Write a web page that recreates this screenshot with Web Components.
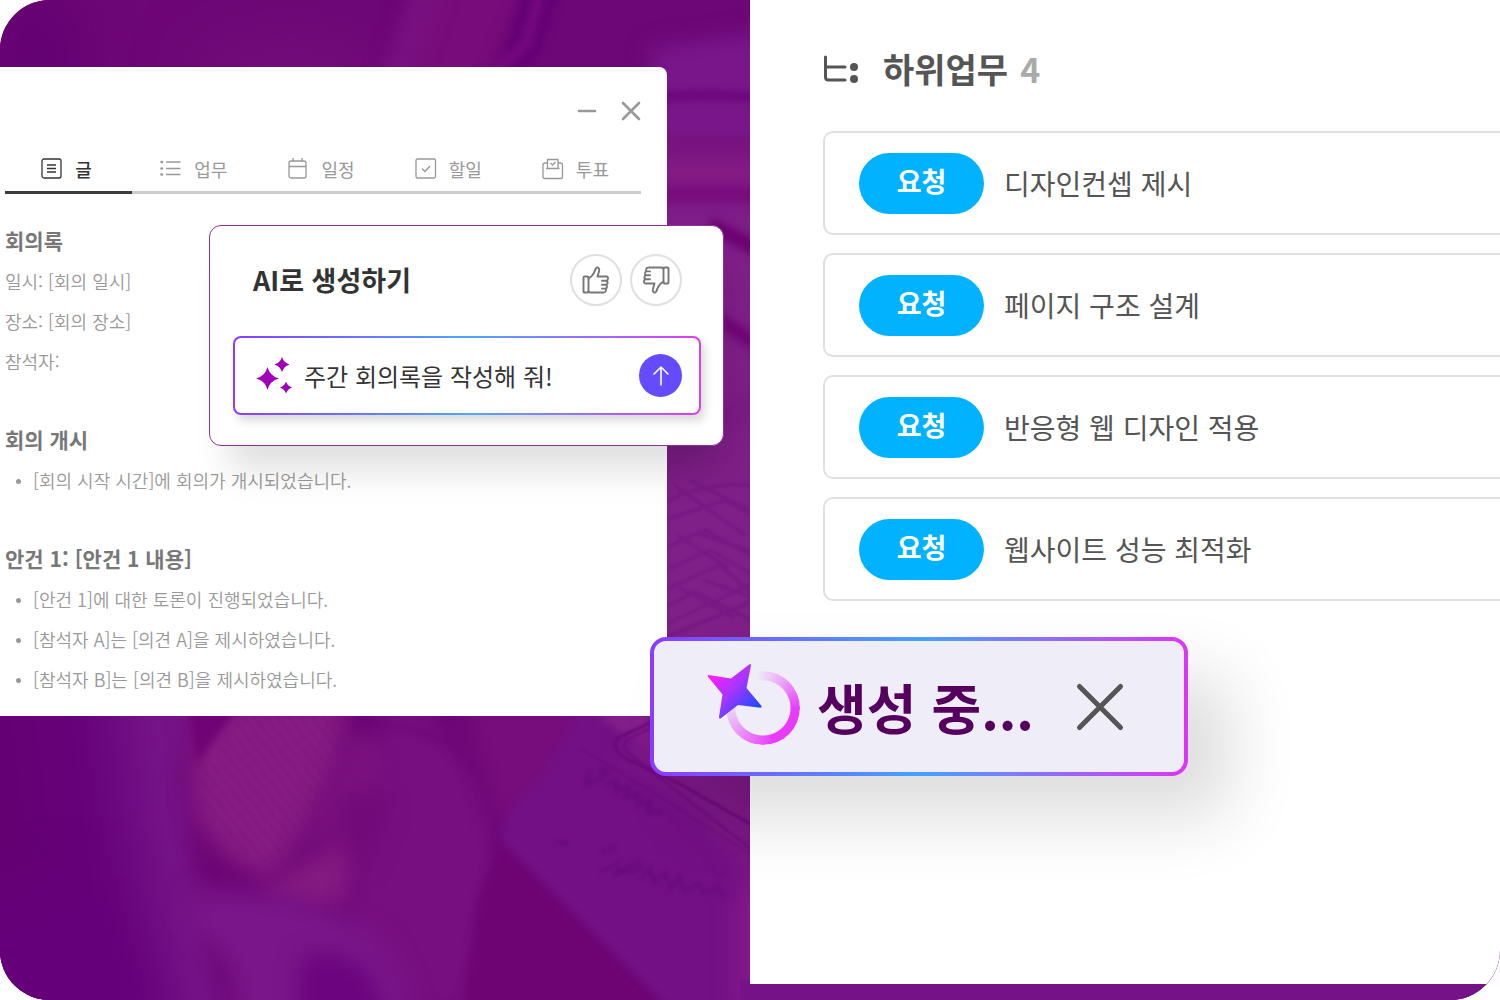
<!DOCTYPE html>
<html lang="ko">
<head>
<meta charset="utf-8">
<meta name="viewport" content="width=device-width, initial-scale=1">
<title>AI로 생성하기</title>
<style>
  body { margin: 0; background: #fff; font-family: "Noto Sans CJK KR", "Noto Sans", sans-serif; }
</style>
</head>
<body>
<work-stage>
  <photo-backdrop slot="backdrop"></photo-backdrop>
  <post-window slot="left">
    <post-tab icon="post" active>글</post-tab>
    <post-tab icon="list">업무</post-tab>
    <post-tab icon="calendar">일정</post-tab>
    <post-tab icon="todo">할일</post-tab>
    <post-tab icon="vote">투표</post-tab>
    <note-section slot="body" heading="회의록">
      <note-line>일시: [회의 일시]</note-line>
      <note-line>장소: [회의 장소]</note-line>
      <note-line>참석자:</note-line>
    </note-section>
    <note-section slot="body" heading="회의 개시">
      <note-line bullet>[회의 시작 시간]에 회의가 개시되었습니다.</note-line>
    </note-section>
    <note-section slot="body" heading="안건 1: [안건 1 내용]">
      <note-line bullet>[안건 1]에 대한 토론이 진행되었습니다.</note-line>
      <note-line bullet>[참석자 A]는 [의견 A]을 제시하였습니다.</note-line>
      <note-line bullet>[참석자 B]는 [의견 B]을 제시하였습니다.</note-line>
    </note-section>
  </post-window>
  <subtask-panel slot="right" heading="하위업무" count="4">
    <subtask-item status="요청">디자인컨셉 제시</subtask-item>
    <subtask-item status="요청">페이지 구조 설계</subtask-item>
    <subtask-item status="요청">반응형 웹 디자인 적용</subtask-item>
    <subtask-item status="요청">웹사이트 성능 최적화</subtask-item>
  </subtask-panel>
  <ai-prompt slot="overlay" heading="AI로 생성하기" prompt="주간 회의록을 작성해 줘!"></ai-prompt>
  <progress-toast slot="overlay">생성 중...</progress-toast>
</work-stage>

<script>
const RESET = `
  *, *::before, *::after { box-sizing: border-box; }
  h2, h3, p { margin: 0; }
  button { font: inherit; color: inherit; background: none; border: 0; padding: 0; cursor: pointer; }
  svg { display: block; }
`;

class BaseElement extends HTMLElement {
  connectedCallback() {
    if (this.shadowRoot) return;
    this.attachShadow({ mode: "open" }).innerHTML = `<style>${RESET}${this.css()}</style>${this.html()}`;
  }
}

customElements.define("work-stage", class extends BaseElement {
  css() { return `
    :host { display: block; }
    .stage { position: relative; display: grid; grid-template-columns: 1fr 1fr; min-height: 100vh;
      border-radius: 50px 0 50px 50px; overflow: hidden; background: #6f0676; }
  `; }
  html() { return `<main class="stage"><slot name="backdrop"></slot><slot name="left"></slot><slot name="right"></slot><slot name="overlay"></slot></main>`; }
});

/* Purple-toned, out-of-focus desk photo drawn with soft shapes */
customElements.define("photo-backdrop", class extends BaseElement {
  css() { return `:host { position: absolute; inset: 0; } svg { width: 100%; height: 100%; }`; }
  html() {
    const blur = (id, deviation) => `<filter id="${id}" filterUnits="userSpaceOnUse" x="-150" y="-150" width="1100" height="1300" color-interpolation-filters="sRGB"><feGaussianBlur stdDeviation="${deviation}"/></filter>`;
    return `
    <svg viewBox="0 0 1500 1000" preserveAspectRatio="xMinYMin slice" aria-hidden="true">
      <defs>
        ${blur("b40", 28)}${blur("b12", 11)}${blur("b4", 4)}${blur("b1", 1)}${blur("b2", 2)}
        <pattern id="knit" width="9" height="9" patternUnits="userSpaceOnUse" patternTransform="rotate(-38)">
          <path d="M2 0V9" stroke="#721078" stroke-width="1.5" opacity=".4"/>
        </pattern>
        <linearGradient id="sleeve" gradientUnits="userSpaceOnUse" x1="0" y1="760" x2="200" y2="735"><stop offset="0" stop-color="#650073"/><stop offset=".4" stop-color="#66017a"/><stop offset=".8" stop-color="#761489"/><stop offset="1" stop-color="#781588"/></linearGradient>
      </defs>
      <rect width="1500" height="1000" fill="#6d0676"/>
      <rect width="70" height="200" fill="#620072" filter="url(#b40)"/>
      <ellipse cx="290" cy="70" rx="100" ry="40" fill="#730c7b" filter="url(#b40)"/>
      <path d="M420-20H530L480 90H390Z" fill="#780c7a" filter="url(#b12)"/>
      <path d="M420-20H440L405 90H380Z" fill="#7a1384" filter="url(#b12)"/>
      <path d="M522-10H560L540 50L515 80H500Z" fill="#650076" filter="url(#b4)"/>
      <path d="M540-5L526 44L488 80" fill="none" stroke="#7b0b80" stroke-width="8" filter="url(#b4)"/>
      <path d="M650 48L780 30V230H650Z" fill="#79178a" filter="url(#b12)"/>
      <path d="M650 100Q700 90 770 100" stroke="#6a007a" stroke-width="8" fill="none" filter="url(#b4)"/>
      <path d="M650 136H780V158H650Z" fill="#78137f" filter="url(#b4)"/>
      <path d="M650 160H780V188H650Z" fill="#861c82" filter="url(#b12)"/>
      <path d="M650 188H780V205H650Z" fill="#78087b" filter="url(#b4)"/>
      <path d="M650 205H780V720H650Z" fill="#7f1f88" filter="url(#b12)"/>
      <path d="M710 225L770 255" stroke="#6c0070" stroke-width="15" filter="url(#b4)"/>
      <path d="M720 320L765 350" stroke="#710478" stroke-width="14" filter="url(#b4)"/>
      <path d="M655 470Q700 430 760 400" stroke="#761680" stroke-width="12" filter="url(#b12)" fill="none"/>
      <g fill="none" stroke="#741681" stroke-width="3" opacity=".7" filter="url(#b1)">
        <path d="M660 505Q705 480 755 486M665 520L725 500L760 520M660 550L705 530L760 560M660 573L710 550L765 582M660 592L720 565L765 605M660 610L695 592L755 622"/>
        <path d="M674 485L745 535M690 480L755 513M677 535L728 568M700 534L755 553M660 640L755 600M660 627L755 582M680 588L735 618M704 580L755 598"/>
      </g>
      <path d="M-60 680H190L180 780Q190 890 230 1040H-60Z" fill="url(#sleeve)" filter="url(#b12)"/>
      <path d="M-80 900L100 880L180 1040H-80Z" fill="#66007a" filter="url(#b40)"/>
      <path d="M190 700H350L335 780Q290 860 268 880Q205 850 193 805Z" fill="#861c83" filter="url(#b12)"/>
      <path d="M188 700H245L195 765Z" fill="#700375" filter="url(#b4)"/>
      <path d="M240 716H348L325 790Q290 850 270 865Q205 840 200 785Z" fill="url(#knit)" filter="url(#b1)"/>
      <path d="M352 735L380 735L410 780L350 830L300 850L330 780Z" fill="#7a127e" filter="url(#b12)"/>
      <path d="M340 840Q370 805 370 800L350 905Q280 910 260 890Z" fill="#841b82" filter="url(#b12)"/>
      <path d="M380 690Q470 720 500 850L470 1010H400L350 930Q350 840 380 800Z" fill="#770f80" filter="url(#b12)"/>
      <path d="M340 800Q350 780 390 805L365 870L340 850Z" fill="#730a7a" filter="url(#b12)"/>
      <path d="M190 890Q340 890 390 950L430 1040H230Q250 960 190 930Z" fill="#7a1689" filter="url(#b12)"/>
      <path d="M300 960Q330 940 370 975L395 1040H300Z" fill="#6b047e" filter="url(#b12)"/>
      <path d="M353 722Q420 725 455 748Q495 785 500 850" fill="none" stroke="#6c0578" stroke-width="6" opacity=".8" filter="url(#b4)"/>
      <path d="M460 690H600L585 770L515 820L500 835Z" fill="#770d7c" filter="url(#b12)"/>
      <path d="M500 842L780 1130H445L478 900Z" fill="#6e0474" filter="url(#b4)"/>
      <path d="M590 690H780V1060H720L500 840Q505 805 540 780Z" fill="#731085" filter="url(#b4)"/>
      <path d="M655 716H760V890L690 800L620 755Z" fill="#7c1986" filter="url(#b12)"/>
      <path d="M598 716L650 700V745L620 732Z" fill="#831f8b" filter="url(#b4)"/>
      <path d="M735 1010V900L765 850V1010Z" fill="#84188b" filter="url(#b12)"/>
      <path d="M652 722L618 738Q610 748 625 758L680 784L752 825" fill="none" stroke="#690979" stroke-width="3" filter="url(#b1)"/>
      <path d="M656 726L628 739Q618 746 632 756L752 850" fill="none" stroke="#6e0b7d" stroke-width="2" filter="url(#b1)"/>
      <path d="M580 748L625 775L760 860" fill="none" stroke="#690979" stroke-width="1" filter="url(#b1)"/>
      <g fill="none" stroke="#62067a" stroke-width="4" opacity=".6" filter="url(#b2)">
        <path d="M590 770L586 784L602 778Q612 768 598 770M606 785L617 782L616 791L628 787L626 798L638 794L637 804L650 802L648 812L662 812"/>
        <path d="M555 842L570 843M600 852L616 848M620 862L600 872M620 868L614 876L638 861Q648 872 622 872M640 880L650 868L654 883L665 873L670 889L680 876L684 891L700 884L704 893L718 888L725 898"/>
      </g>
      <rect x="740" y="980" width="780" height="30" fill="#761287"/>
    </svg>`; }
});

const TAB_ICONS = {
  post: `<rect x="1" y="1" width="19" height="19" rx="2"/><path d="M6 7H15M6 10.500H15M6 14H15"/>`,
  list: `<path d="M6 4H20.500M6 10.500H20.500M6 16.500H20.500"/><path d="M1.500 4H2M1.500 10.500H2M1.500 16.500H2" stroke-width="2.600" stroke-linecap="round"/>`,
  calendar: `<rect x="2" y="3" width="17" height="17" rx="2"/><path d="M2 8.500H19M6 0V4M15 0V4"/>`,
  todo: `<rect x="1" y="1" width="19.500" height="19" rx="1.500"/><path d="M7 10.500L10 13.500L15 8"/>`,
  vote: `<path d="M5 5H3Q1 5 1 7V18.500Q1 20.500 3 20.500H18.500Q20.500 20.500 20.500 18.500V7Q20.500 5 18.500 5H16.500M4 10.500H17.500M5.500 10.500V1.500H16V10.500M8.500 5L10.500 7L13.500 4"/>`
};

customElements.define("post-tab", class extends BaseElement {
  css() { return `
    :host { display: block; }
    button { display: flex; align-items: center; justify-content: center; gap: 12px; width: 100%; height: 50px; padding: 2px 4px 0 0;
      font-size: 18px; line-height: 26px; color: #999; border-bottom: 3px solid #ccc; }
    svg { width: 22px; height: 22px; fill: none; stroke: currentColor; stroke-width: 1.3; }
    :host([active]) button { color: #333; border-color: #3c3c3c; font-weight: 500; }
  `; }
  html() { return `<button role="tab" type="button" aria-selected="${this.hasAttribute("active")}">
    <svg viewBox="0 0 22 22" aria-hidden="true">${TAB_ICONS[this.getAttribute("icon")]}</svg><span><slot></slot></span></button>`; }
});

customElements.define("post-window", class extends BaseElement {
  css() { return `
    :host { display: block; position: relative; padding: 67px 83px 0 0; }
    .window { background: #fff; border-radius: 0 8px 0 0; padding: 32px 26px 17px 5px; }
    .controls { display: flex; justify-content: flex-end; gap: 20px; }
    .controls svg { width: 24px; height: 24px; stroke: #999; stroke-width: 2.6; stroke-linecap: round; fill: none; }
    .controls button + button svg { margin-right: -2px; }
    .tabs { display: grid; grid-template-columns: repeat(5, 1fr); margin-top: 21px; }
    .body { display: flex; flex-direction: column; gap: 38px; margin-top: 26px; }
  `; }
  html() { return `<section class="window">
    <div class="controls">
      <button type="button" aria-label="최소화"><svg viewBox="0 0 24 24"><path d="M4 12H20"/></svg></button>
      <button type="button" aria-label="닫기"><svg viewBox="0 0 24 24"><path d="M4 4L20 20M20 4L4 20"/></svg></button>
    </div>
    <div class="tabs" role="tablist"><slot></slot></div>
    <div class="body"><slot name="body"></slot></div>
  </section>`; }
});

customElements.define("note-section", class extends BaseElement {
  css() { return `
    :host { display: block; }
    h3 { margin-bottom: 1px; font-size: 21px; line-height: 40px; font-weight: 700; color: #777; }
  `; }
  html() { return `<h3>${this.getAttribute("heading")}</h3><slot></slot>`; }
});

customElements.define("note-line", class extends BaseElement {
  css() { return `
    :host { display: flex; align-items: center; font-size: 18px; line-height: 40px; color: #999; font-weight: 350; }
    :host([bullet])::before { content: ""; width: 5px; height: 5px; margin: 2px 12px 0 11px; border-radius: 50%; background: #999; }
  `; }
  html() { return `<p><slot></slot></p>`; }
});

customElements.define("subtask-panel", class extends BaseElement {
  css() { return `
    :host { display: block; position: relative; background: #fff; margin: 0 0 16px; padding: 44px 0 0 73px; overflow: hidden; }
    header { display: flex; align-items: center; gap: 24px; height: 50px; }
    svg { width: 36px; height: 28px; }
    h2 { display: flex; gap: 12px; font-size: 34px; line-height: 50px; font-weight: 700; color: #555; }
    .count { color: #aaa; }
    .list { display: flex; flex-direction: column; gap: 18px; margin: 37px -20px 0 0; }
  `; }
  html() { return `<header>
      <svg viewBox="0 0 36 28" fill="none" stroke="#555" stroke-width="3" stroke-linecap="round" aria-hidden="true">
        <path d="M2.500 2V22Q2.500 25 5.500 25H22M3 12H22"/><circle cx="31" cy="12" r="4" fill="#555" stroke="none"/><circle cx="31" cy="24" r="4" fill="#555" stroke="none"/>
      </svg>
      <h2>${this.getAttribute("heading")}<span class="count">${this.getAttribute("count")}</span></h2>
    </header>
    <div class="list" role="list"><slot></slot></div>`; }
});

customElements.define("subtask-item", class extends BaseElement {
  css() { return `
    :host { display: flex; align-items: center; gap: 20px; box-sizing: border-box; height: 104px; padding: 0 34px;
      border: 2px solid #e0e0e0; border-radius: 10px; background: #fff; }
    .status { width: 125px; height: 61px; padding-bottom: 4px; border-radius: 31px; background: #00b2ff; color: #fff;
      display: flex; align-items: center; justify-content: center; font-size: 27px; line-height: 40px; font-weight: 700; }
    .title { font-size: 28px; line-height: 42px; color: #555; }
  `; }
  connectedCallback() { super.connectedCallback(); this.setAttribute("role", "listitem"); }
  html() { return `<span class="status">${this.getAttribute("status")}</span><span class="title"><slot></slot></span>`; }
});

const THUMB = `<rect x="1.500" y="10.500" width="5" height="16" rx="1"/>
  <path d="M6.500 12.500Q11 10 12.500 5.500L13.800 2.500Q15 .8 16.500 2Q17.800 3 17 5.500L15.500 10.500H24.500Q26.300 10.700 26 13Q25.800 14.500 24 14.800Q26 15.500 25.600 17.200Q25.300 18.600 23.700 18.800Q25.300 19.500 25 21Q24.800 22.400 23.300 22.600Q24.500 23.500 23.800 25Q23.200 26.500 21.500 26.500H9Q7.500 26.500 6.500 25.500M20 14.800H24M20 18.800H23.700M20 22.600H23.300"/>`;

customElements.define("ai-prompt", class extends BaseElement {
  css() { return `
    :host { position: absolute; left: 209px; top: 225px; width: 515px; }
    .card { padding: 28px 22px 30px 23px; background: #fff; border: 1px solid #8f2f9f; border-radius: 12px;
      box-shadow: 10px 34px 36px -10px rgba(0, 0, 0, .13); }
    header { display: flex; align-items: center; gap: 8px; padding: 0 19px 0 20px; }
    h2 { flex: 1; font-size: 27px; line-height: 52px; font-weight: 700; color: #333; }
    .vote { display: flex; align-items: center; justify-content: center; width: 52px; height: 52px; border: 2px solid #e0e0e0; border-radius: 50%; }
    .vote svg { width: 28px; height: 28px; fill: none; stroke: #777; stroke-width: 1.9; stroke-linejoin: round; stroke-linecap: round; }
    .down svg { transform: rotate(180deg); }
    form { display: flex; align-items: center; gap: 12px; height: 79px; margin-top: 30px; padding: 0 17px 0 21px;
      border: 2px solid transparent; border-radius: 8px;
      background: linear-gradient(#fff, #fff) padding-box, linear-gradient(90deg, #8a3cff, #4da6ff 50%, #dd3cf5) border-box;
      box-shadow: 4px 6px 10px rgba(0, 0, 0, .14); }
    .spark { width: 36px; height: 38px; fill: #a000b8; }
    input { flex: 1; min-width: 0; border: 0; padding: 0; outline: 0; background: none; font: inherit; font-size: 24px; line-height: 38px; height: 42px; color: #333; }
    .send { width: 43px; height: 43px; border-radius: 50%; background: #654bff; display: flex; align-items: center; justify-content: center; }
    .send svg { width: 20px; height: 22px; stroke: #fff; stroke-width: 1.6; fill: none; stroke-linecap: round; stroke-linejoin: round; }
  `; }
  html() { return `<section class="card">
    <header><h2>${this.getAttribute("heading")}</h2>
      <button class="vote" type="button" aria-label="좋아요"><svg viewBox="0 0 28 28">${THUMB}</svg></button>
      <button class="vote down" type="button" aria-label="싫어요"><svg viewBox="0 0 28 28">${THUMB}</svg></button>
    </header>
    <form onsubmit="return false">
      <svg class="spark" viewBox="0 0 36 38" aria-hidden="true">
        <path d="M11.500 10Q13.800 19.200 23 21.500Q13.800 23.800 11.500 33Q9.200 23.800 0 21.500Q9.200 19.200 11.500 10Z"/>
        <path d="M26 0Q27.800 5.700 33.500 7.500Q27.800 9.300 26 15Q24.200 9.300 18.500 7.500Q24.200 5.700 26 0Z"/>
        <path d="M30 24.500Q31.500 29 36 30.500Q31.500 32 30 36.500Q28.500 32 24 30.500Q28.500 29 30 24.500Z"/>
      </svg>
      <input type="text" aria-label="프롬프트" value="${this.getAttribute("prompt")}">
      <button class="send" aria-label="보내기"><svg viewBox="0 0 20 22"><path d="M10 20V2M3 9L10 2L17 9"/></svg></button>
    </form>
  </section>`; }
});

customElements.define("progress-toast", class extends BaseElement {
  css() { return `
    :host { position: absolute; left: 650px; top: 637px; width: 538px; }
    .toast { display: flex; align-items: center; height: 139px; padding: 0 59px 0 53px; border: 4px solid transparent; border-radius: 16px;
      background: linear-gradient(#efedf7, #efedf7) padding-box, linear-gradient(90deg, #8a3cff, #45a2ff 50%, #dd35f5) border-box;
      box-shadow: 40px 40px 70px rgba(0, 0, 0, .14); }
    .spinner { position: relative; width: 94px; height: 84px; margin: 0 16px 4px 0; }
    .spinner svg { position: absolute; inset: 0; width: 94px; height: 84px; }
    .ring { position: absolute; left: 19px; top: 8px; width: 74px; height: 74px; border-radius: 50%;
      background: conic-gradient(from -10deg, rgba(232, 60, 250, 0), rgba(232, 60, 250, .45) 14%, #e83cfa 28%, #e83cfa 48%, rgba(232, 60, 250, 0) 82%);
      -webkit-mask: radial-gradient(circle, transparent 27px, #000 28px); mask: radial-gradient(circle, transparent 27px, #000 28px); }
    p { flex: 1; font-size: 54px; line-height: 80px; font-weight: 700; color: #55005f; white-space: nowrap; }
    .close svg { width: 50px; height: 50px; fill: none; stroke: #555; stroke-width: 5; stroke-linecap: round; }
  `; }
  html() { return `<section class="toast" role="status">
    <div class="spinner" aria-hidden="true"><div class="ring"></div>
      <svg viewBox="0 0 94 84"><defs><linearGradient id="star" x1=".15" y1=".2" x2=".85" y2=".85"><stop offset="0" stop-color="#f520ff"/><stop offset=".45" stop-color="#a536ff"/><stop offset="1" stop-color="#1f49ff"/></linearGradient></defs>
        <path d="M1.500 12L24 15.500L42.500 1.200Q44 .8 44 2.500L39.500 25L54.500 43Q55 44.500 53.500 44.700L31 42L13.500 55.500Q12 56 12 54L15.500 31.500L.8 13.500Q.3 12 1.500 12Z" fill="url(#star)"/></svg>
    </div>
    <p><slot></slot></p>
    <button class="close" type="button" aria-label="닫기"><svg viewBox="0 0 50 50"><path d="M4.500 4.500L45.500 45.500M45.500 4.500L4.500 45.500"/></svg></button>
  </section>`; }
});
</script>
</body>
</html>
